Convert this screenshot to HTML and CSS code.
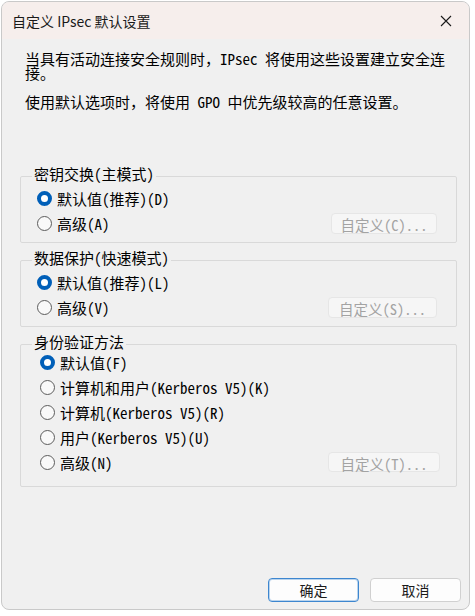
FILE: index.html
```html
<!DOCTYPE html>
<html lang="zh-CN">
<head>
<meta charset="UTF-8">
<title>自定义 IPsec 默认设置</title>
<link rel="stylesheet" href="styles.css">
</head>
<body>

<!-- DIALOG WINDOW -->
<div class="dialog">
  <div class="titlebar">
    <span class="title">自定义 IPsec 默认设置</span>
    <button class="close" aria-label="关闭">
      <svg width="12" height="12" viewBox="0 0 12 12"><path d="M1 1L11 11M11 1L1 11" stroke="#1a1a1a" stroke-width="1.1" fill="none"/></svg>
    </button>
  </div>

  <div class="content">
    <p class="intro">当具有活动连接安全规则时，IPsec 将使用这些设置建立安全连接。</p>
    <p class="intro second">使用默认选项时，将使用 GPO 中优先级较高的任意设置。</p>

    <!-- main mode -->
    <div class="group">
      <div class="group-title">密钥交换(主模式)</div>
      <div class="row"><label class="radio"><input type="radio" name="kx" checked><span>默认值(推荐)(D)</span></label></div>
      <div class="row"><label class="radio"><input type="radio" name="kx"><span>高级(A)</span></label><button class="custom" disabled>自定义(C)...</button></div>
    </div>

    <!-- quick mode -->
    <div class="group">
      <div class="group-title">数据保护(快速模式)</div>
      <div class="row"><label class="radio"><input type="radio" name="dp" checked><span>默认值(推荐)(L)</span></label></div>
      <div class="row"><label class="radio"><input type="radio" name="dp"><span>高级(V)</span></label><button class="custom wide" disabled>自定义(S)...</button></div>
    </div>

    <!-- auth -->
    <div class="group auth">
      <div class="group-title">身份验证方法</div>
      <div class="row"><label class="radio"><input type="radio" name="au" checked><span>默认值(F)</span></label></div>
      <div class="row"><label class="radio"><input type="radio" name="au"><span>计算机和用户(Kerberos V5)(K)</span></label></div>
      <div class="row"><label class="radio"><input type="radio" name="au"><span>计算机(Kerberos V5)(R)</span></label></div>
      <div class="row"><label class="radio"><input type="radio" name="au"><span>用户(Kerberos V5)(U)</span></label></div>
      <div class="row"><label class="radio"><input type="radio" name="au"><span>高级(N)</span></label><button class="custom" disabled>自定义(T)...</button></div>
    </div>
  </div>

  <div class="footer">
    <button class="btn primary">确定</button>
    <button class="btn">取消</button>
  </div>
</div>

</body>
</html>
```

FILE: styles.css
```css
/* -------- RESET -------- */
*{margin:0;padding:0;box-sizing:border-box}

:root{
  --face:#f0f0f0;
  --caption:#f6eeec;
  --line:#d9d9d9;
  --accent:#005fb8;
  --dlg-font:"Noto Sans Mono CJK SC","Noto Sans CJK SC",monospace;
  --ui-font:"Noto Sans CJK SC","Noto Sans",sans-serif;
}

body{background:#fff;font-family:var(--dlg-font);color:#000}

/* -------- WINDOW -------- */
.dialog{
  margin:1px 0 0 1px;width:469px;height:609px;
  background:var(--face);
  border:1px solid #c9c9c9;border-radius:8px;overflow:hidden;
  display:flex;flex-direction:column;
}
.titlebar{
  height:37px;flex:none;background:var(--caption);
  display:flex;align-items:center;justify-content:space-between;
  padding-left:10px;
}
.title{font-family:var(--ui-font);font-size:14px;color:#1a1a1a;line-height:1}
.close{
  width:46px;height:37px;border:0;background:none;
  display:flex;align-items:center;justify-content:center;
}

/* -------- CONTENT -------- */
.content{padding:13px 12px 0 18px;flex:1}
.intro{font-size:15px;line-height:14px;padding:0 10px 0 5px}
.intro.second{margin-top:15px;margin-bottom:67px}

/* GROUP BOXES ------------------------------------------------- */
.group{
  border:1px solid var(--line);border-radius:2px;
  padding:0 19px 6px 16px;margin-bottom:17px;
}
.group-title{
  font-size:15px;line-height:18px;width:max-content;
  margin:-12px 0 3px -5px;padding:0 2px;background:var(--face);
}
.group.auth{padding:0 16px 11px 19px}
.auth .group-title{margin:-12px 0 -1.5px -8px}

.row{height:25px;display:flex;align-items:center;justify-content:space-between}
.radio{display:flex;align-items:center;gap:5px;font-size:15px}
.radio input{
  appearance:none;width:15px;height:15px;border-radius:50%;
  border:1px solid #5c5c5c;background:#f9f9f9;flex:none;
}
.radio input:checked{border:4.5px solid var(--accent);background:#fff}

.custom{
  width:106px;height:21px;border:1px solid #e6e6e6;border-radius:4px;
  background:#f6f6f6;color:#a3a3a3;font-family:var(--dlg-font);font-size:14.5px;
}
.custom.wide{width:109px}
.auth .custom{width:112px;height:20px}

/* -------- BUTTONS -------- */
.footer{display:flex;justify-content:flex-end;gap:11px;padding:0 8px 7px 0}
.btn{
  width:91px;height:24px;border:1px solid #d0d0d0;border-radius:4px;
  background:#fdfdfd;font-family:var(--ui-font);font-size:14px;color:#1a1a1a;
}
.btn.primary{border-color:#3d86cf;box-shadow:inset 0 0 0 1px rgba(61,134,207,.35)}
```
